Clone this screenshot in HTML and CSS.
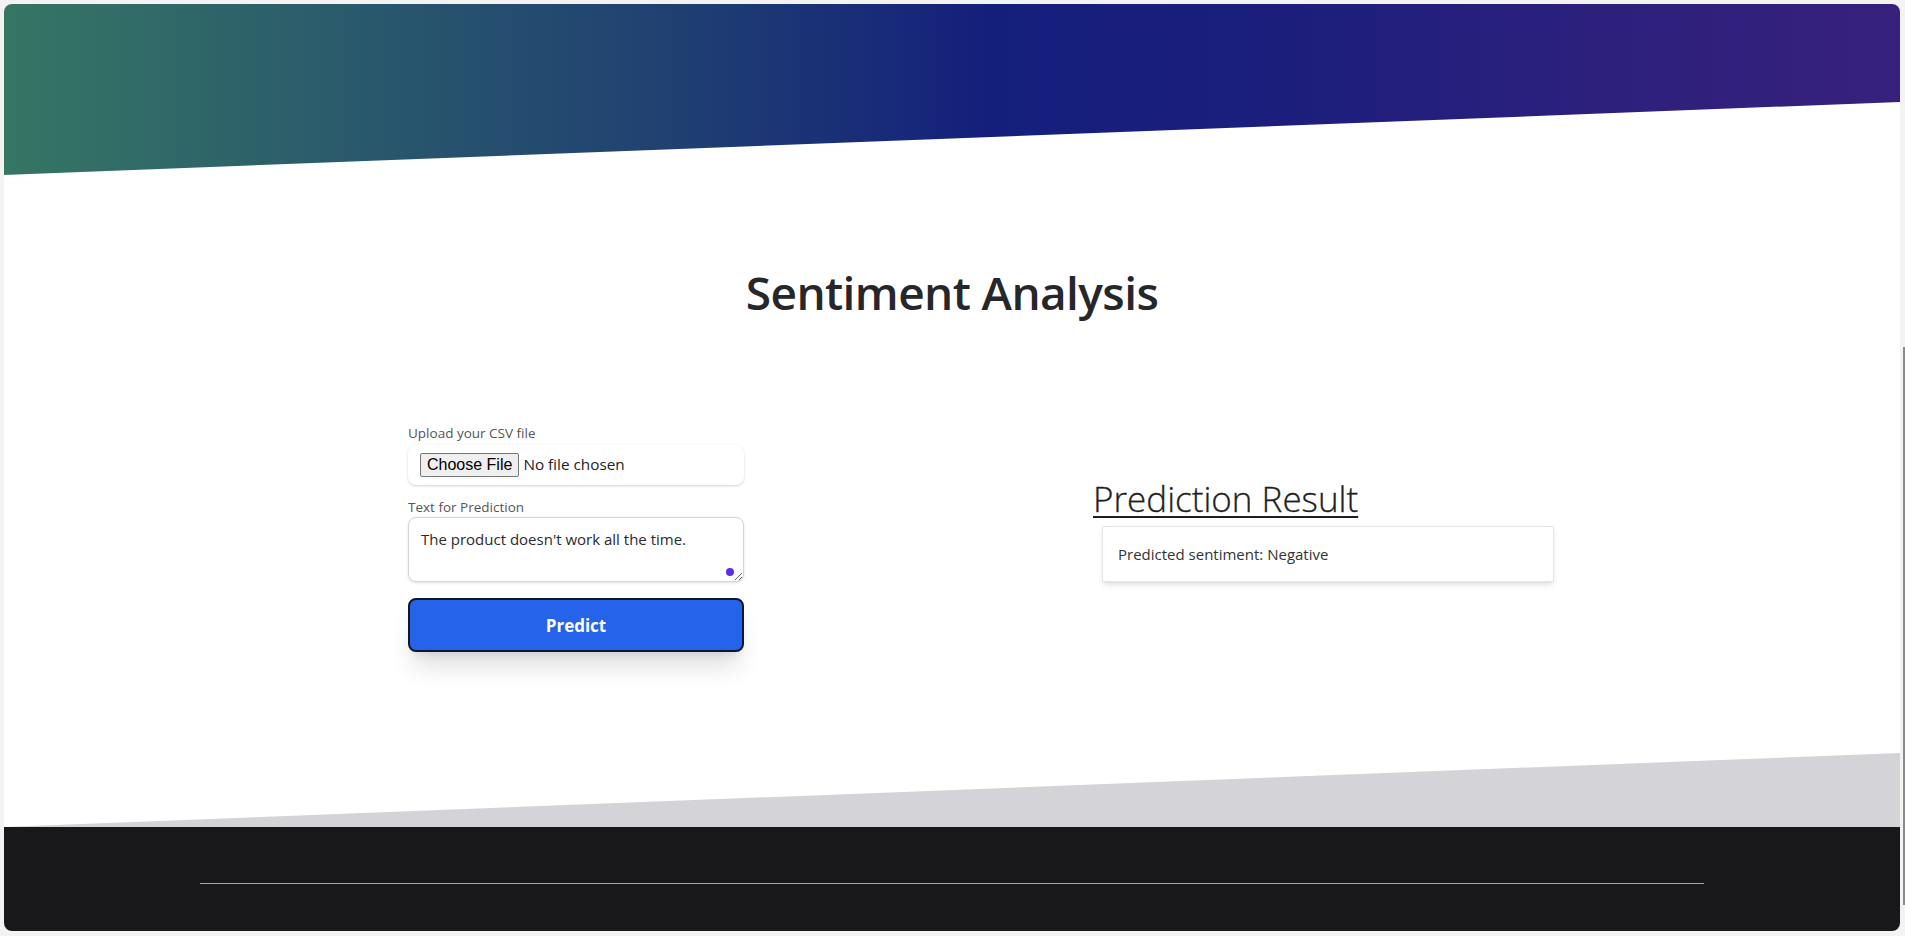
FILE: index.html
```html
<!DOCTYPE html>
<html lang="en">
<head>
<meta charset="utf-8">
<title>Sentiment Analysis</title>
<link rel="stylesheet" href="styles.css">
</head>
<body>
<div class="card">
  <header class="hero"></header>
  <main class="main">
    <h1 class="title">Sentiment Analysis</h1>
    <section class="grid">
      <form class="form">
        <label class="label" for="csv">Upload your CSV file</label>
        <div class="file-box">
          <input class="file" id="csv" type="file">
        </div>
        <label class="label label-text" for="txt">Text for Prediction</label>
        <div class="ta-wrap">
          <textarea class="ta" id="txt">The product doesn't work all the time.</textarea>
          <span class="dot"></span>
        </div>
        <button class="btn" type="button">Predict</button>
      </form>
      <div class="result">
        <h2 class="result-title">Prediction Result</h2>
        <div class="result-box">Predicted sentiment: Negative</div>
      </div>
    </section>
  </main>
  <div class="band"></div>
  <footer class="footer">
    <div class="footer-inner">
      <hr class="footer-line">
    </div>
  </footer>
</div>
<div class="scrollthumb"></div>
</body>
</html>
```
FILE: styles.css
```css
* { box-sizing: border-box; }
html, body { height: 100%; }
body {
  margin: 0;
  padding: 4px 5px 5px 4px;
  background: #f3f3f3;
  font-family: "Open Sans", "Noto Sans", sans-serif;
  color: #222;
  overflow: hidden;
}
.card {
  height: 927px;
  width: 1896px;
  background: #fff;
  border-radius: 8px;
  overflow: hidden;
  display: flex;
  flex-direction: column;
}
.hero {
  height: 171px;
  flex: none;
  background: linear-gradient(90deg, #367664 0%, #2a5a6c 18%, #1f3f72 36%, #141f7c 52%, #1b1e7c 66%, #2c207c 84%, #38217e 100%);
  clip-path: polygon(0 0, 100% 0, 100% 57.3%, 0 100%);
}
.main {
  flex: 1;
  display: flex;
  flex-direction: column;
}
.title {
  margin: 93px 0 0;
  text-align: center;
  font-size: 46px;
  line-height: 48px;
  font-weight: 600;
  color: #26262b;
  letter-spacing: -0.6px;
}
.grid {
  margin: 107px auto 0;
  width: 1504px;
  display: grid;
  grid-template-columns: 1fr 1fr;
  align-items: start;
}
.form {
  justify-self: center;
  width: 336px;
  display: flex;
  flex-direction: column;
}
.label {
  font-size: 13.5px;
  line-height: 20px;
  color: #555;
  margin-bottom: 2px;
}
.label-text { margin-top: 12px; margin-bottom: 0; }
.file-box {
  height: 40px;
  background: #fff;
  border-radius: 8px;
  box-shadow: 0 1px 3px rgba(0,0,0,0.12), 0 1px 2px rgba(0,0,0,0.06);
  display: flex;
  align-items: center;
  padding-left: 12px;
}
.file {
  font-family: "Open Sans", sans-serif;
  font-size: 15.3px;
  color: #222;
}
.file::file-selector-button {
  font-family: "Liberation Sans", Arial, sans-serif;
  font-size: 16px;
  height: 24px;
  padding: 0 6px;
  margin-right: 4px;
  background: #efefef;
  border: 1px solid #767676;
  border-radius: 2px;
  color: #000;
}
.ta-wrap { position: relative; }
.ta {
  display: block;
  width: 100%;
  height: 65px;
  padding: 10px 12px;
  border: 1px solid #d4d4d8;
  border-radius: 8px;
  box-shadow: 0 1px 3px rgba(0,0,0,0.12);
  font-family: "Open Sans", sans-serif;
  font-size: 15px;
  line-height: 22px;
  color: #2b2b2b;
  resize: vertical;
}
.dot {
  position: absolute;
  right: 10px;
  bottom: 6px;
  width: 8px;
  height: 8px;
  border-radius: 50%;
  background: #5b2cf0;
}
.btn {
  margin-top: 16px;
  height: 54px;
  width: 100%;
  background: #2563eb;
  color: #fff;
  border: 2px solid #0f172a;
  border-radius: 8px;
  font-family: "Open Sans", sans-serif;
  font-size: 17px;
  font-weight: 700;
  box-shadow: 0 20px 25px -5px rgba(0,0,0,0.12), 0 8px 10px -6px rgba(0,0,0,0.1);
}
.result {
  justify-self: center;
  width: 470px;
  padding-top: 56px;
}
.result-title {
  margin: 0;
  font-size: 35px;
  line-height: 40px;
  font-weight: 300;
  color: #1f1f1f;
  text-decoration: underline;
  text-decoration-thickness: 2px;
  text-underline-offset: 4px;
  -webkit-text-stroke: 0.3px #1f1f1f;
}
.result-box {
  margin: 7px 9px 0;
  height: 56px;
  border: 1px solid #e5e5e5;
  background: #fff;
  box-shadow: 0 4px 6px -1px rgba(0,0,0,0.1), 0 2px 4px -2px rgba(0,0,0,0.08);
  display: flex;
  align-items: center;
  padding-left: 15px;
  font-size: 15px;
  color: #333;
}
.band {
  height: 74px;
  flex: none;
  background: #d4d4d8;
  clip-path: polygon(0 100%, 100% 0, 100% 100%);
}
.footer {
  height: 104px;
  flex: none;
  background: #18181b;
  padding-top: 56px;
}
.footer-inner {
  max-width: 1536px;
  margin: 0 auto;
  padding: 0 16px;
}
.footer-line {
  margin: 0;
  border: 0;
  height: 1px;
  background: #a1a1aa;
}
.scrollthumb {
  position: absolute;
  left: 1903px;
  top: 347px;
  width: 2px;
  height: 558px;
  background: #8a8a8a;
}
```
